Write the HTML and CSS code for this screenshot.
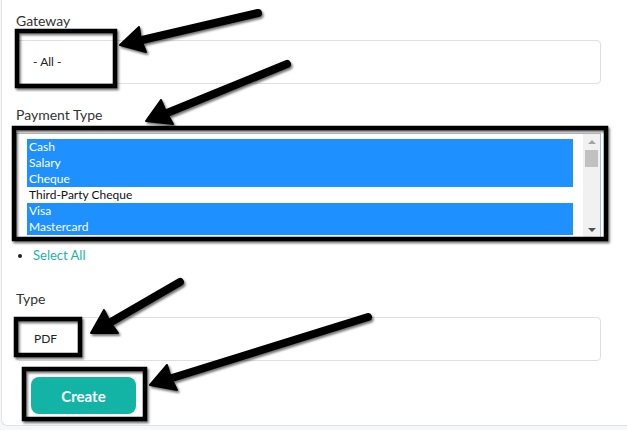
FILE: index.html
```html
<!DOCTYPE html>
<html>
<head>
<meta charset="utf-8">
<link rel="stylesheet" href="styles.css">
</head>
<body>
<div class="card">
  <div class="field">
    <label class="label">Gateway</label>
    <div class="input">- All -</div>
  </div>
  <div class="field field-pay">
    <label class="label">Payment Type</label>
    <div class="listbox">
      <div class="options">
        <div class="opt sel">Cash</div>
        <div class="opt sel">Salary</div>
        <div class="opt sel">Cheque</div>
        <div class="opt">Third-Party Cheque</div>
        <div class="opt sel">Visa</div>
        <div class="opt sel">Mastercard</div>
      </div>
      <div class="scrollbar">
        <span class="arr up"></span>
        <span class="thumb"></span>
        <span class="spacer"></span>
        <span class="arr down"></span>
      </div>
    </div>
    <ul class="links"><li><a class="link">Select All</a></li></ul>
  </div>
  <div class="field field-type">
    <label class="label">Type</label>
    <div class="input">PDF</div>
  </div>
  <button class="btn">Create</button>
</div>

<svg class="annot" width="627" height="430" viewBox="0 0 627 430">
  <defs>
    <filter id="sh" x="-20%" y="-20%" width="140%" height="140%">
      <feDropShadow dx="1.5" dy="2" stdDeviation="1.3" flood-color="#000" flood-opacity="0.55"/>
    </filter>
  </defs>
  <g filter="url(#sh)" fill="none" stroke="#000" stroke-width="4.5">
    <rect x="17" y="31" width="98" height="55"/>
    <rect x="14" y="128" width="592" height="111"/>
    <rect x="16" y="319" width="64" height="36"/>
    <rect x="24" y="369" width="121" height="50"/>
  </g>
  <g filter="url(#sh)" stroke="#000" stroke-width="8" stroke-linecap="round" fill="#000">
    <line x1="258" y1="13" x2="142" y2="40"/>
    <polygon stroke-width="2" stroke-linejoin="round" points="120,45 146,52 141,40 139,27"/>
    <line x1="287" y1="64" x2="167" y2="113"/>
    <polygon stroke-width="2" stroke-linejoin="round" points="146,121 173,124 166,112 161,100"/>
    <line x1="180" y1="282" x2="111" y2="322"/>
    <polygon stroke-width="2" stroke-linejoin="round" points="91,333 118,333 110,322 104,310"/>
    <line x1="368" y1="317" x2="172" y2="378"/>
    <polygon stroke-width="2" stroke-linejoin="round" points="150,385 177,390 171,378 167,365"/>
  </g>
</svg>
</body>
</html>
```

FILE: styles.css
```css
html, body {
  margin: 0;
  padding: 0;
}
body {
  width: 627px;
  height: 430px;
  overflow: hidden;
  background: #f6f7f9;
  font-family: Lato, "Open Sans", Arial, sans-serif;
  color: #333;
  position: relative;
}
.card {
  margin-left: 1px;
  width: 611px;
  height: 413px;
  background: #fff;
  border-left: 1px solid #e1e3e7;
  border-bottom: 1px solid #e1e3e7;
  border-bottom-left-radius: 6px;
  padding: 12px 0 0 14px;
  box-sizing: content-box;
}
.field {
  display: flex;
  flex-direction: column;
  align-items: flex-start;
}
.label {
  font-size: 14px;
  line-height: 18px;
  color: #333;
}
.input {
  margin-top: 10px;
  width: 585px;
  height: 44px;
  box-sizing: border-box;
  border: 1px solid #dedfe2;
  border-radius: 4px;
  padding-left: 16px;
  font-size: 12px;
  line-height: 42px;
  color: #222;
}
.field-pay {
  margin-top: 22px;
}
.listbox {
  margin-top: 9px;
  width: 585px;
  height: 105px;
  box-sizing: border-box;
  border: 1px solid #bfc3c8;
  border-right-color: #9fbfe3;
  display: flex;
  background: #fff;
}
.options {
  flex: 1;
  padding: 5px 10px 2px 10px;
}
.opt {
  height: 16px;
  line-height: 16px;
  font-size: 12px;
  padding-left: 2px;
  color: #111;
}
.opt.sel {
  background: #1e90ff;
  color: #fff;
}
.scrollbar {
  width: 17px;
  background: #f1f1f1;
  display: flex;
  flex-direction: column;
  align-items: center;
}
.arr {
  width: 0;
  height: 0;
  border-left: 4px solid transparent;
  border-right: 4px solid transparent;
}
.arr.up {
  margin-top: 6px;
  border-bottom: 4px solid #a3a3a3;
}
.arr.down {
  margin-bottom: 5px;
  border-top: 4px solid #505050;
}
.thumb {
  margin-top: 6px;
  width: 13px;
  height: 17px;
  background: #c1c1c1;
}
.spacer {
  flex: 1;
}
.links {
  margin: 8px 0 0 0;
  padding-left: 17px;
  font-size: 13px;
  line-height: 18px;
}
.links li {
  list-style: disc;
  color: #222;
}
.link {
  color: #20b3a4;
}
.field-type {
  margin-top: 26px;
}
.field-type .input {
  margin-top: 9px;
  padding-left: 17px;
}
.btn {
  display: block;
  margin: 16px 0 0 15px;
  width: 105px;
  height: 37px;
  border: none;
  border-radius: 8px;
  background: #13b4a6;
  color: #fff;
  font-family: Lato, "Open Sans", Arial, sans-serif;
  font-weight: bold;
  font-size: 15px;
}
.annot {
  position: absolute;
  left: 0;
  top: 0;
  pointer-events: none;
}
```
